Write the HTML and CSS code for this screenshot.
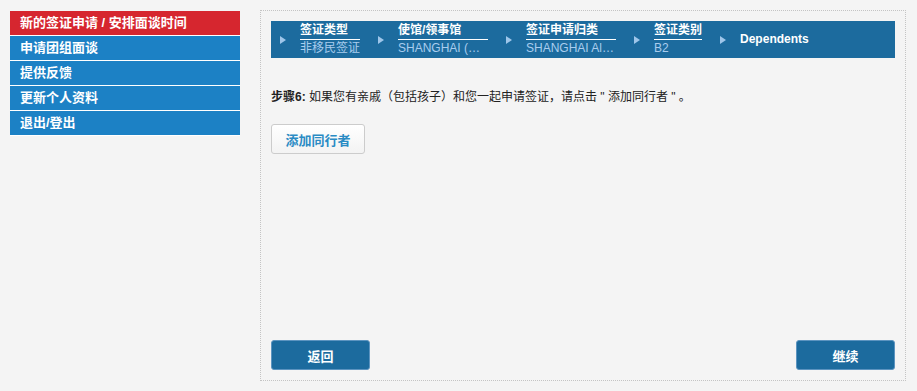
FILE: index.html
```html
<!DOCTYPE html>
<html lang="zh-CN">
<head>
<meta charset="utf-8">
<title>Dependents</title>
<link rel="stylesheet" href="styles.css">
</head>
<body>
<div class="page">
  <nav class="sidebar">
    <a class="nav-item active">新的签证申请 / 安排面谈时间</a>
    <a class="nav-item">申请团组面谈</a>
    <a class="nav-item">提供反馈</a>
    <a class="nav-item">更新个人资料</a>
    <a class="nav-item">退出/登出</a>
  </nav>
  <main class="panel">
    <div class="steps">
      <div class="step">
        <span class="arrow"></span>
        <div class="step-text">
          <div class="step-title">签证类型</div>
          <div class="step-value">非移民签证</div>
        </div>
      </div>
      <div class="step">
        <span class="arrow"></span>
        <div class="step-text w90">
          <div class="step-title">使馆/领事馆</div>
          <div class="step-value">SHANGHAI (Consulate)</div>
        </div>
      </div>
      <div class="step">
        <span class="arrow"></span>
        <div class="step-text w90">
          <div class="step-title">签证申请归类</div>
          <div class="step-value">SHANGHAI All Applicants</div>
        </div>
      </div>
      <div class="step">
        <span class="arrow"></span>
        <div class="step-text">
          <div class="step-title">签证类别</div>
          <div class="step-value">B2</div>
        </div>
      </div>
      <div class="step">
        <span class="arrow"></span>
        <div class="step-current">Dependents</div>
      </div>
    </div>
    <p class="instructions"><b>步骤6:</b> 如果您有亲戚（包括孩子）和您一起申请签证，请点击 " 添加同行者 " 。</p>
    <div class="add-row">
      <button class="btn-light">添加同行者</button>
    </div>
    <div class="actions">
      <button class="btn-primary">返回</button>
      <button class="btn-primary">继续</button>
    </div>
  </main>
</div>
</body>
</html>
```

FILE: styles.css
```css
* { box-sizing: border-box; }
html, body {
  margin: 0;
  padding: 0;
  background: #f4f4f4;
  font-family: "Liberation Sans", Arial, "Noto Sans CJK SC", sans-serif;
  color: #222;
}
.page {
  display: flex;
  align-items: flex-start;
  gap: 20px;
  padding: 10px;
}
.sidebar {
  width: 230px;
  margin-top: 1px;
  display: flex;
  flex-direction: column;
}
.nav-item {
  display: block;
  height: 25px;
  line-height: 24px;
  padding-left: 10px;
  border-bottom: 1px solid #ffffff;
  background: #1c81c5;
  color: #ffffff;
  font-size: 13px;
  font-weight: bold;
  white-space: nowrap;
}
.nav-item.active {
  background: #d6262f;
}
.panel {
  width: 646px;
  height: 371px;
  border: 1px dotted #c4c4c4;
  padding: 10px;
  display: flex;
  flex-direction: column;
}
.steps {
  height: 37px;
  background: #1c6b9e;
  display: flex;
  align-items: center;
  padding-left: 9px;
  gap: 18px;
}
.step {
  display: flex;
  align-items: center;
  gap: 14px;
}
.arrow {
  width: 0;
  height: 0;
  border-top: 4px solid transparent;
  border-bottom: 4px solid transparent;
  border-left: 6px solid #9ec6ea;
  margin-top: 1px;
}
.step-text {
  display: flex;
  flex-direction: column;
  font-size: 12px;
  margin-top: 1px;
}
.step-text.w90 { width: 90px; }
.step-title {
  color: #ffffff;
  font-weight: bold;
  line-height: 14px;
  padding-bottom: 2px;
  border-bottom: 1px solid #ffffff;
  white-space: nowrap;
}
.step-value {
  color: #a9cdee;
  line-height: 17px;
  white-space: nowrap;
  overflow: hidden;
  text-overflow: ellipsis;
}
.step-current {
  color: #ffffff;
  font-weight: bold;
  font-size: 12px;
  margin-top: -2px;
}
.instructions {
  margin: 30px 0 0;
  font-size: 12px;
  line-height: 18px;
  color: #222;
}
.add-row {
  margin-top: 18px;
}
.btn-light {
  width: 94px;
  height: 30px;
  border: 1px solid #cccccc;
  border-radius: 3px;
  background: linear-gradient(#ffffff, #f3f3f3);
  color: #2a8bc4;
  font-family: inherit;
  font-size: 13px;
  font-weight: bold;
  padding: 0;
}
.actions {
  margin-top: auto;
  display: flex;
  justify-content: space-between;
}
.btn-primary {
  width: 99px;
  height: 30px;
  border: 1px solid #5c94c0;
  border-radius: 3px;
  background: #1c6b9e;
  color: #ffffff;
  font-family: inherit;
  font-size: 13px;
  font-weight: bold;
  padding: 0;
}
```
